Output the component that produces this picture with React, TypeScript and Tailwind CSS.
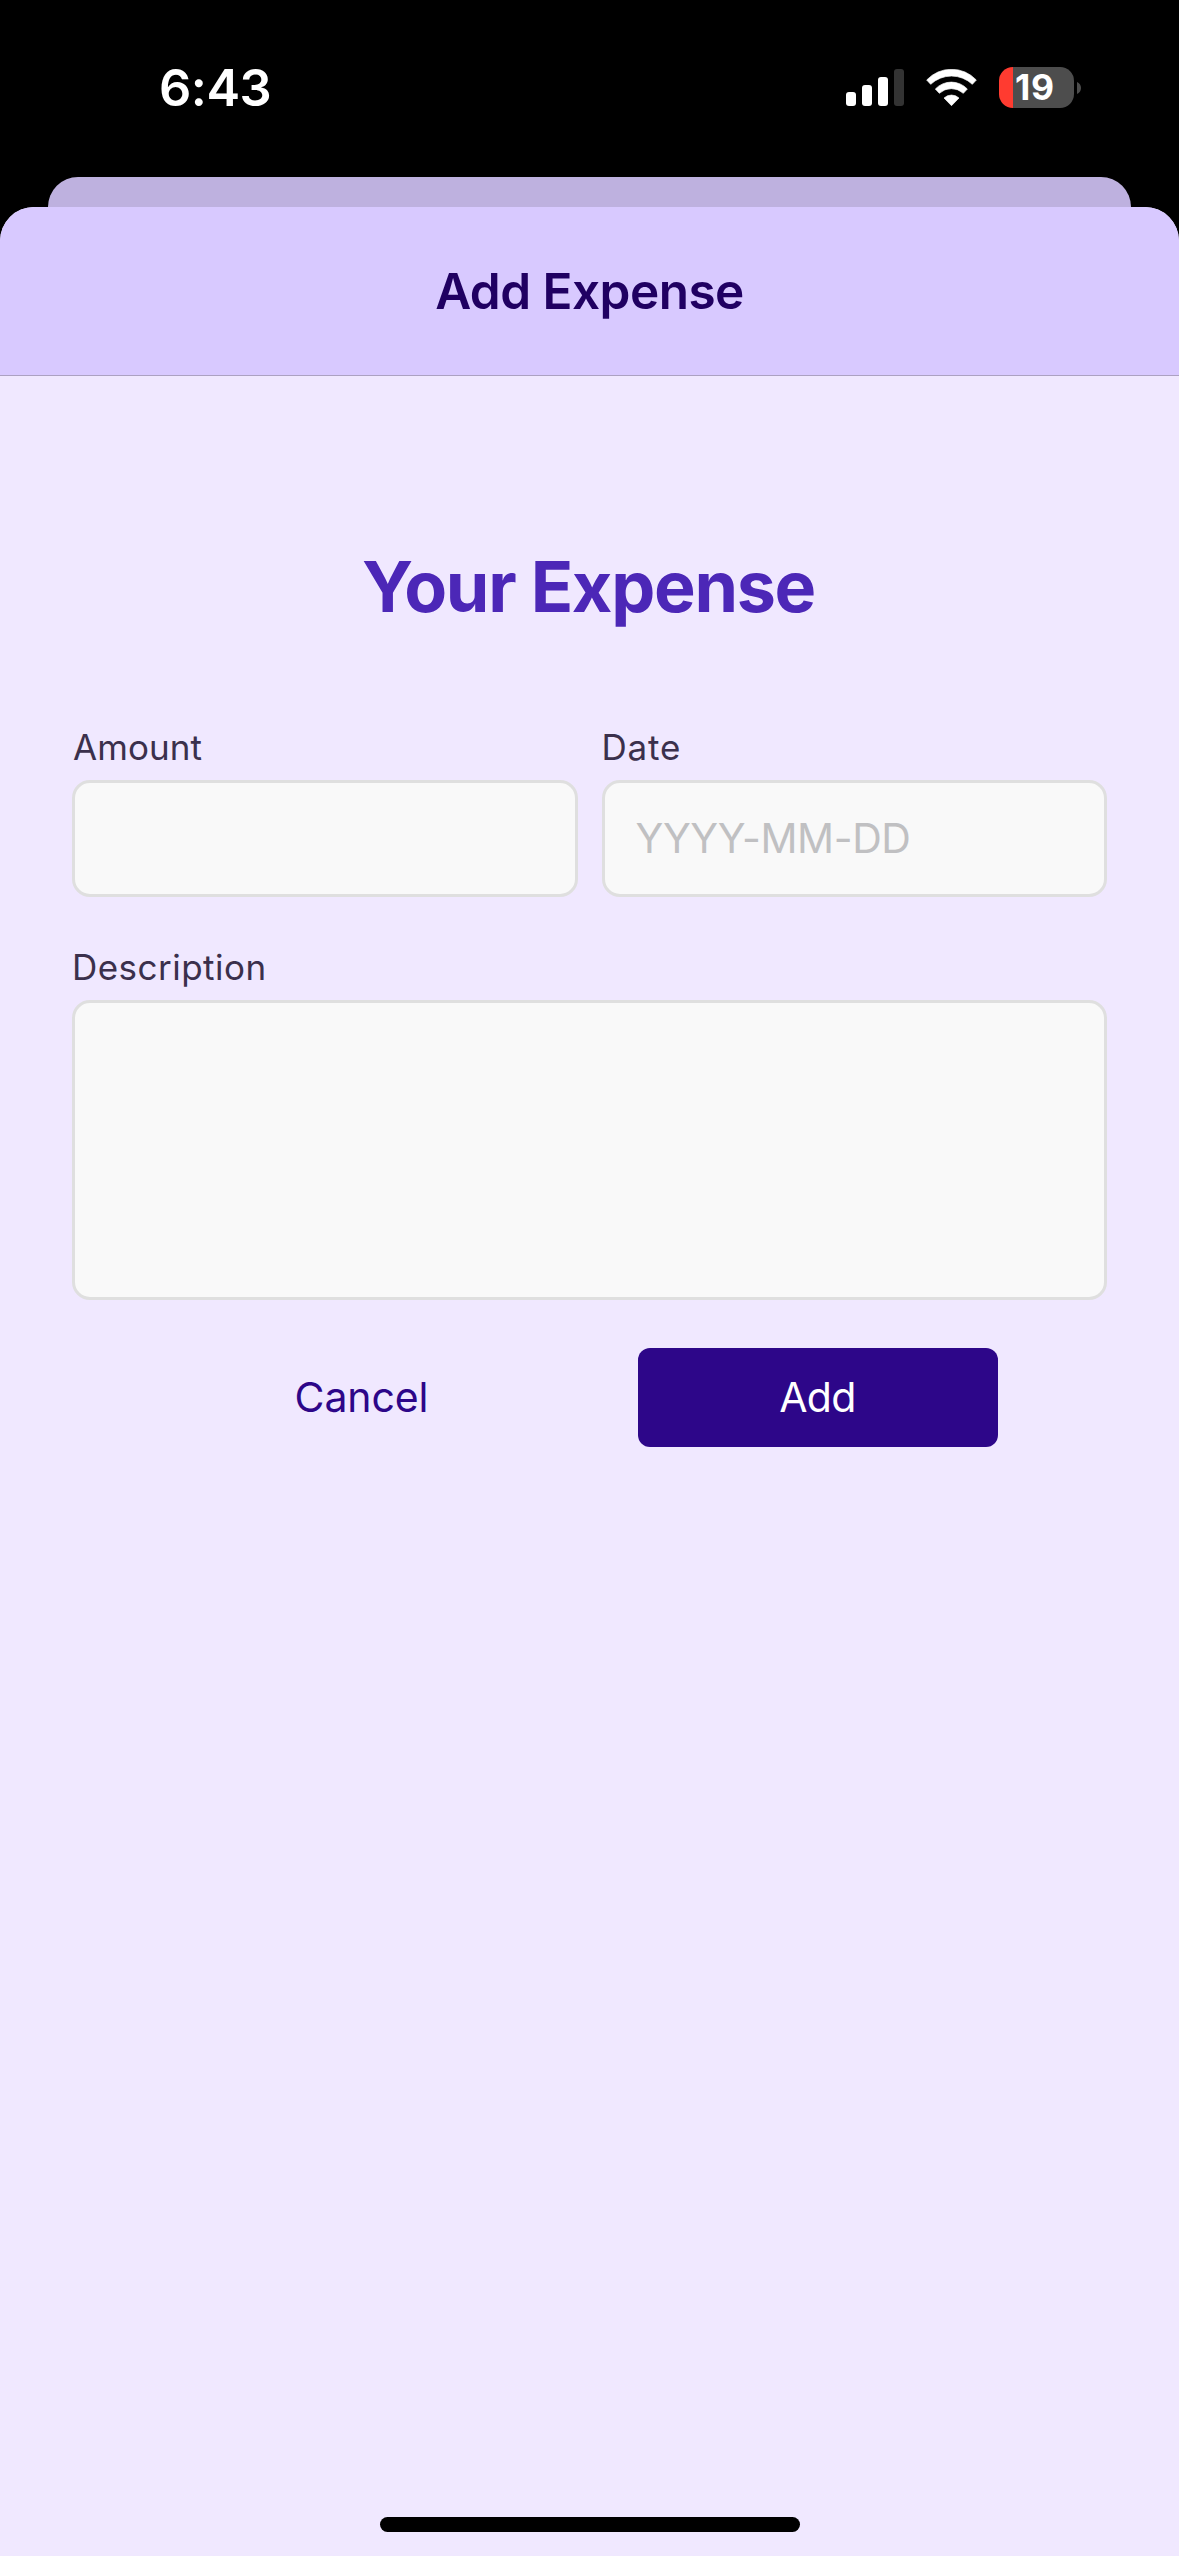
import type { ReactNode } from "react";

function SignalIcon() {
  return (
    <svg className="block" width="58" height="38" viewBox="0 0 58 38" fill="#fff">
      <rect x="0" y="23" width="10" height="14" rx="3" />
      <rect x="16" y="16" width="10" height="21" rx="3" />
      <rect x="32" y="8" width="10" height="29" rx="3" />
      <rect x="48" y="0" width="10" height="37" rx="3" fill="#333" />
    </svg>
  );
}

function WifiIcon() {
  return (
    <svg className="block" width="51" height="38" viewBox="318 57 153 114" fill="#fff" stroke="#fff" strokeWidth="2" strokeLinejoin="round">
      <path d="M320 90A102 102 0 0 1 469 90L457 103A91 91 0 0 0 332 103Z" />
      <path d="M346 117A66 66 0 0 1 442 117L430 130A53 53 0 0 0 358 130Z" />
      <path d="M372 144A33 33 0 0 1 417 144L394.5 167Z" />
    </svg>
  );
}

function Battery() {
  return (
    <div className="flex items-center">
      <div className="h-[41px] w-[75px] overflow-hidden rounded-[14px] bg-[linear-gradient(to_right,#ff3b30_14px,#4d4d4d_14px)] pl-[16px] text-[35.5px] leading-[41px] font-bold tracking-[0.8px]">
        19
      </div>
      <svg className="ml-[3px] block" width="4" height="12" viewBox="0 0 4 12" fill="#4d4d4d">
        <path d="M0 0C2.4 1 4 3.3 4 6S2.4 11 0 12Z" />
      </svg>
    </div>
  );
}

function StatusBar() {
  return (
    <header className="flex h-[177px] items-start justify-between pr-[98px] pl-[159px] text-white">
      <div className="mt-[63px] text-[50.5px] leading-[50px] font-semibold tracking-[-0.5px]">6:43</div>
      <div className="mt-[67px] flex h-[41px] items-start">
        <div className="mt-0.5"><SignalIcon /></div>
        <div className="mt-0.5 mr-[22px] ml-[22px]"><WifiIcon /></div>
        <Battery />
      </div>
    </header>
  );
}

function Field({ label, labelClass, children }: { label: string; labelClass: string; children: ReactNode }) {
  return (
    <label className="flex min-w-0 flex-1 flex-col">
      <span className={`mb-3 h-10 text-[35px] leading-[38px] text-[#3b304c] ${labelClass}`}>{label}</span>
      {children}
    </label>
  );
}

const inputClass =
  "block w-full resize-none rounded-[18px] border-[3px] border-[#dfdfdf] bg-[#f9f9f9] pb-[2px] pl-[31px] text-[41px] tracking-[-0.4px] outline-none placeholder:text-[#c0c0c2] placeholder:opacity-100";

export default function App() {
  return (
    <div className="flex h-[2556px] w-[1179px] flex-col overflow-hidden bg-black font-[Inter,sans-serif]">
      <StatusBar />
      <div className="mx-12 h-[78px] shrink-0 rounded-t-[30px] bg-[#beb1df]" />
      <main className="relative -mt-12 flex flex-1 flex-col overflow-hidden rounded-t-[34px] bg-[#f0e8ff]">
        <div className="h-[169px] shrink-0 border-b border-[#aca1c2] bg-[#d8c9ff] text-center text-[49.5px] leading-[168px] font-semibold tracking-[-0.53px] text-[#200062]">
          Add Expense
        </div>
        <h1 className="mt-[170px] h-20 pr-[2px] text-center text-[70px] leading-[81px] font-bold tracking-[-1.3px] text-[#4c27b7]">
          Your Expense
        </h1>
        <form className="mt-[102px] flex flex-col px-[72px]">
          <div className="flex gap-6">
            <Field label="Amount" labelClass="pl-[1px] tracking-[0.07px]">
              <input className={`${inputClass} h-[117px]`} />
            </Field>
            <Field label="Date" labelClass="tracking-[0.8px]">
              <input className={`${inputClass} h-[117px]`} placeholder="YYYY-MM-DD" />
            </Field>
          </div>
          <div className="mt-[51px] flex">
            <Field label="Description" labelClass="tracking-[0.48px]">
              <textarea className={`${inputClass} h-[300px]`} />
            </Field>
          </div>
          <div className="mt-12 flex justify-center gap-24 text-[41px] leading-[99px]">
            <button type="button" className="h-[99px] w-[360px] tracking-[-0.1px] text-[#2d0689]">Cancel</button>
            <button type="button" className="h-[99px] w-[360px] rounded-xl bg-[#2d0689] tracking-[-0.6px] text-white">Add</button>
          </div>
        </form>
        <div className="mx-auto mt-auto mb-6 h-[15px] w-[420px] rounded-full bg-black" />
      </main>
    </div>
  );
}
